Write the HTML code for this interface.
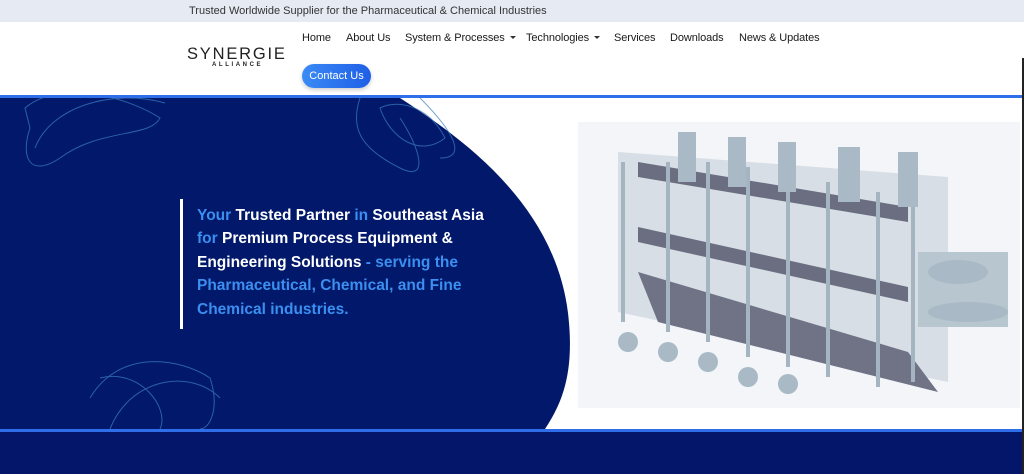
<!DOCTYPE html>
<html><head><meta charset="utf-8"><style>
*{margin:0;padding:0;box-sizing:border-box}
body{width:1024px;height:474px;overflow:hidden;font-family:"Liberation Sans",sans-serif;background:#fff;position:relative}
.top{position:absolute;left:0;top:0;width:1024px;height:22px;background:#e6ebf3;font-size:11px;color:#333;line-height:22px;padding-left:189px}
.nav{position:absolute;top:22px;left:0;width:1024px;height:73px;background:#fff}
.logo{position:absolute;left:187px;top:23px;font-size:16.5px;letter-spacing:1.8px;color:#222}
.logo2{position:absolute;left:212px;top:40px;font-size:6px;letter-spacing:2.6px;color:#222;font-weight:bold}
.nav a{position:absolute;top:10px;font-size:11px;color:#1a1a1a;text-decoration:none;letter-spacing:-0.1px}
.caret{display:inline-block;border-left:3px solid transparent;border-right:3px solid transparent;border-top:3px solid #333;margin-left:5px;vertical-align:2px}
.btn{position:absolute;left:302px;top:42px;width:69px;height:24px;border-radius:12px;background:linear-gradient(90deg,#3a8bf5,#1f5fe6);color:#fff;font-size:11px;text-align:center;line-height:24px;box-shadow:0 2px 4px rgba(0,0,0,.2)}
.line1{position:absolute;top:95px;left:0;width:1024px;height:3px;background:#2e6ee8}
.line2{position:absolute;top:429px;left:0;width:1024px;height:3px;background:#2e6ee8}
.bottom{position:absolute;top:432px;left:0;width:1024px;height:42px;background:#03166a}
.hero{position:absolute;top:98px;left:0}
.txt{position:absolute;left:180px;top:199px;border-left:3px solid #fff;padding-left:14px;padding-top:5px;height:130px;font-size:15.5px;font-weight:bold;line-height:23.4px;color:#fff}
.txt .b{color:#3a8ff0}
.sb{position:absolute;right:0;top:58px;width:2px;height:416px;background:#222}
</style></head><body>
<div class="top">Trusted Worldwide Supplier for the Pharmaceutical &amp; Chemical Industries</div>
<div class="nav">
<div class="logo">SYNERGIE</div><div class="logo2">ALLIANCE</div>
<a style="left:302px">Home</a>
<a style="left:346px">About Us</a>
<a style="left:405px">System &amp; Processes<span class="caret"></span></a>
<a style="left:526px">Technologies<span class="caret"></span></a>
<a style="left:614px">Services</a>
<a style="left:670px">Downloads</a>
<a style="left:739px">News &amp; Updates</a>
<div class="btn">Contact Us</div>
</div>
<div class="line1"></div>
<svg class="hero" width="1024" height="331" viewBox="0 0 1024 331">
<rect width="1024" height="331" fill="#fff"/>
<path d="M0 0 L400 0 C470 45 555 110 568 215 C575 275 562 305 545 331 L0 331 Z" fill="#02186a"/>
<g fill="none" stroke="#3c7fc4" stroke-width="1" opacity=".7">
<path d="M25 10 C60 -20 130 0 160 20 C150 40 100 30 60 60 C30 80 20 60 30 30 Z"/>
<path d="M35 50 C50 10 110 -10 165 5"/>
<path d="M360 0 C350 30 360 50 400 70 C430 85 420 50 400 20"/>
<path d="M380 10 C390 40 420 60 445 40 C430 10 400 0 380 10 Z" />
<path d="M420 0 C450 30 470 60 440 60"/>
<path d="M90 300 C120 250 180 260 210 280 C220 310 210 331 200 331"/>
<path d="M110 331 C130 280 190 270 220 300"/>
<path d="M100 280 C140 270 170 310 160 331"/>
</g>
<g transform="translate(578,24)">
<rect width="442" height="286" fill="#f3f5f8"/>
<polygon points="40,30 370,55 370,260 40,190" fill="#d7dee5"/>
<polygon points="60,150 330,230 360,270 80,200" fill="#6f7385"/>
<polygon points="60,40 330,85 330,100 60,55" fill="#6a6e80"/>
<polygon points="60,105 330,165 330,180 60,120" fill="#6a6e80"/>
<g stroke="#a4b4c1" stroke-width="4">
<line x1="45" y1="40" x2="45" y2="200"/><line x1="90" y1="40" x2="90" y2="210"/>
<line x1="130" y1="40" x2="130" y2="220"/><line x1="170" y1="45" x2="170" y2="235"/>
<line x1="210" y1="50" x2="210" y2="245"/><line x1="250" y1="60" x2="250" y2="255"/>
<line x1="300" y1="70" x2="300" y2="265"/><line x1="335" y1="80" x2="335" y2="260"/>
</g>
<g fill="#a9bac6"><rect x="100" y="10" width="18" height="50"/><rect x="150" y="15" width="18" height="50"/><rect x="200" y="20" width="18" height="50"/><rect x="260" y="25" width="22" height="55"/><rect x="320" y="30" width="20" height="55"/>
<rect x="340" y="130" width="90" height="75" fill="#b8c6d0"/><ellipse cx="380" cy="150" rx="30" ry="12"/><ellipse cx="390" cy="190" rx="40" ry="10"/>
<circle cx="50" cy="220" r="10"/><circle cx="90" cy="230" r="10"/><circle cx="130" cy="240" r="10"/><circle cx="170" cy="255" r="10"/><circle cx="210" cy="262" r="10"/></g>
</g>
</svg>
<div class="txt"><span class="b">Your</span> Trusted Partner <span class="b">in</span> Southeast Asia<br><span class="b">for</span> Premium Process Equipment &amp;<br>Engineering Solutions <span class="b">- serving the<br>Pharmaceutical, Chemical, and Fine<br>Chemical industries.</span></div>
<div class="line2"></div>
<div class="bottom"></div>
<div class="sb"></div>
</body></html>
